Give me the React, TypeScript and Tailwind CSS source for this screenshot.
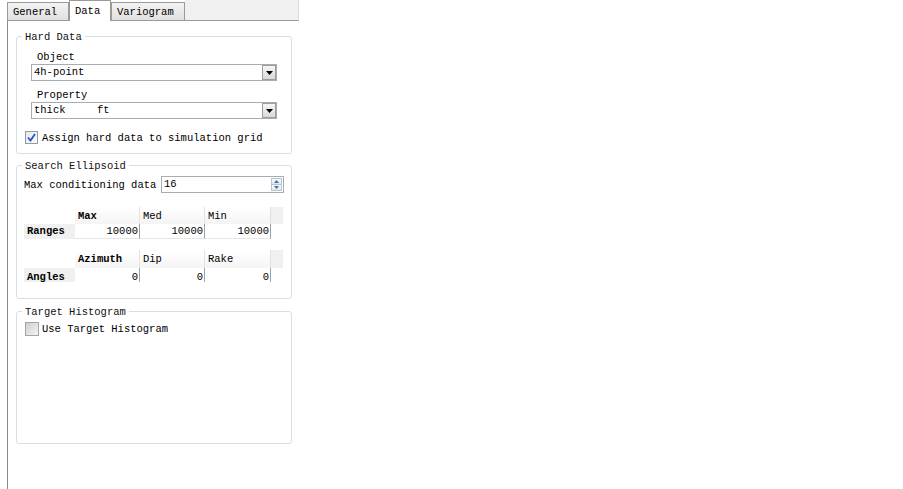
import React from "react";

const line = "leading-[13px]";
// label text sits 1px lower than the bare line box
const lbl = "leading-[13px] pt-[2px]";

function Tab({ label, active, w }: { label: string; active?: boolean; w: string }) {
  if (active) {
    return (
      <div className={`${w} h-[21px] border border-b-0 border-[#9a9a9a] bg-white pl-[5px] pt-[4px] ${line}`}>
        {label}
      </div>
    );
  }
  return (
    <div
      className={`${w} mt-[2px] h-[19px] border border-[#9a9a9a] bg-gradient-to-b from-[#f3f3f3] to-[#e1e1e1] pl-[5px] pt-[3px] ${line}`}
    >
      {label}
    </div>
  );
}

function Group({
  title,
  className,
  children,
}: {
  title: string;
  className?: string;
  children: React.ReactNode;
}) {
  return (
    <fieldset className={`ml-[8px] w-[276px] rounded-[3px] border border-[#d7dfe6] ${className ?? ""}`}>
      <legend className={`ml-[5px] px-[3px] ${lbl} text-[#111]`}>{title}</legend>
      {children}
    </fieldset>
  );
}

function Combo({ value }: { value: string }) {
  return (
    <div className="flex h-[17px] border border-[#a7adb5] bg-white">
      <div className={`flex-1 whitespace-pre pl-[2px] pt-[1px] ${line}`}>{value}</div>
      <div className="flex w-[14px] items-center justify-center border border-[#9d9d9d] bg-gradient-to-b from-[#f6f6f6] to-[#dadada]">
        <svg width="7" height="4" viewBox="0 0 7 4">
          <path d="M0 0h7L3.5 4z" fill="#000" />
        </svg>
      </div>
    </div>
  );
}

function Check({ checked }: { checked?: boolean }) {
  if (checked) {
    return (
      <div className="flex h-[13px] w-[13px] items-center justify-center border border-[#8f9bab] bg-gradient-to-br from-[#e4e8ee] to-[#fbfbfb]">
        <svg width="9" height="9" viewBox="0 0 9 9">
          <path d="M1 4.5l2.5 3L8 1" fill="none" stroke="#2a50c8" strokeWidth="1.8" />
        </svg>
      </div>
    );
  }
  return <div className="h-[14px] w-[14px] border border-[#a4a4a4] bg-gradient-to-br from-[#cfcfcf] to-[#f4f4f4]" />;
}

function Table({
  rowLabel,
  heads,
  values,
  clipped,
}: {
  rowLabel: string;
  heads: string[];
  values: string[];
  clipped?: boolean;
}) {
  // the second table is cut off by its scroll area, so its row text sits lower
  const rowPad = clipped ? "pt-[3px]" : "pt-[1px]";
  return (
    <div className="h-[32px] overflow-hidden">
      <div
        className={`grid grid-cols-[51px_65px_65px_66px_12px] ${
          clipped ? "grid-rows-[18px_17px]" : "grid-rows-[17px_15px]"
        }`}
      >
        <div className="bg-white" />
        {heads.map((h, i) => (
          <div
            key={h}
            className={`border-r border-[#e2e2e2] bg-gradient-to-b from-white to-[#f4f4f4] pl-[3px] pt-[3px] ${line} ${
              i === 0 ? "font-bold" : ""
            }`}
          >
            {h}
          </div>
        ))}
        <div className="bg-[#f0f0f0]" />
        <div className={`bg-[#f0f0f0] pl-[3px] font-bold ${rowPad} ${line}`}>{rowLabel}</div>
        {values.map((v, i) => (
          <div
            key={i}
            className={`border-b border-r border-b-[#e6e6e6] border-r-[#a0a0a0] bg-white pr-[1px] text-right ${rowPad} ${line}`}
          >
            {v}
          </div>
        ))}
        <div className="bg-white" />
      </div>
    </div>
  );
}

export default function App() {
  return (
    <div className="h-[489px] w-[903px] overflow-hidden bg-white font-['Liberation_Mono',monospace] text-[10.5px] text-black">
      <div className="flex h-[21px] w-[299px]">
        <div className="w-[7px]" />
        <Tab label="General" w="w-[62px]" />
        <Tab label="Data" w="w-[42px]" active />
        <Tab label="Variogram" w="w-[74px]" />
        <div className="flex-1 border-b border-r border-b-[#9a9a9a] border-r-[#dcdcdc] bg-[#f0f0f0]" />
      </div>

      <div className="ml-[7px] h-[468px] w-[292px] border-l border-[#8a8a8a] pt-[8px]">
        <Group title="Hard Data">
          <div className="px-[14px] pb-[8px]">
            <div className={`ml-[6px] mt-[7px] ${line}`}>Object</div>
            <Combo value="4h-point" />
            <div className={`ml-[6px] mt-[8px] ${line}`}>Property</div>
            <Combo value="thick     ft" />
            <div className="-ml-[6px] mt-[11px] flex items-center gap-[4px]">
              <Check checked />
              <span className={lbl}>Assign hard data to simulation grid</span>
            </div>
          </div>
        </Group>

        <Group title="Search Ellipsoid" className="mt-[4px]">
          <div className="px-[7px] pb-[16px]">
            <div className="mt-[3px] flex h-[17px] items-center">
              <span className={lbl}>Max conditioning data</span>
              <div className="ml-auto flex h-[17px] w-[123px] border border-[#a7adb5] bg-white">
                <div className={`flex-1 pl-[2px] pt-[1px] ${line}`}>16</div>
                <div className="my-[1px] mr-[1px] flex w-[11px] flex-col">
                  <div className="flex flex-1 items-center justify-center border border-[#b9c3cf] bg-gradient-to-b from-[#fafafa] to-[#e4e8ee]">
                    <svg width="5" height="3" viewBox="0 0 5 3">
                      <path d="M0 3h5L2.5 0z" fill="#3d6fb0" />
                    </svg>
                  </div>
                  <div className="flex flex-1 items-center justify-center border border-t-0 border-[#b9c3cf] bg-gradient-to-b from-[#fafafa] to-[#e4e8ee]">
                    <svg width="5" height="3" viewBox="0 0 5 3">
                      <path d="M0 0h5L2.5 3z" fill="#3d6fb0" />
                    </svg>
                  </div>
                </div>
              </div>
            </div>
            <div className="mt-[14px]">
              <Table rowLabel="Ranges" heads={["Max", "Med", "Min"]} values={["10000", "10000", "10000"]} />
            </div>
            <div className="mt-[11px]">
              <Table rowLabel="Angles" heads={["Azimuth", "Dip", "Rake"]} values={["0", "0", "0"]} clipped />
            </div>
          </div>
        </Group>

        <Group title="Target Histogram" className="mt-[5px] h-[140px]">
          <div className="px-[8px]">
            <div className="mt-[2px] flex items-center gap-[3px]">
              <Check />
              <span className={lbl}>Use Target Histogram</span>
            </div>
          </div>
        </Group>
      </div>
    </div>
  );
}
